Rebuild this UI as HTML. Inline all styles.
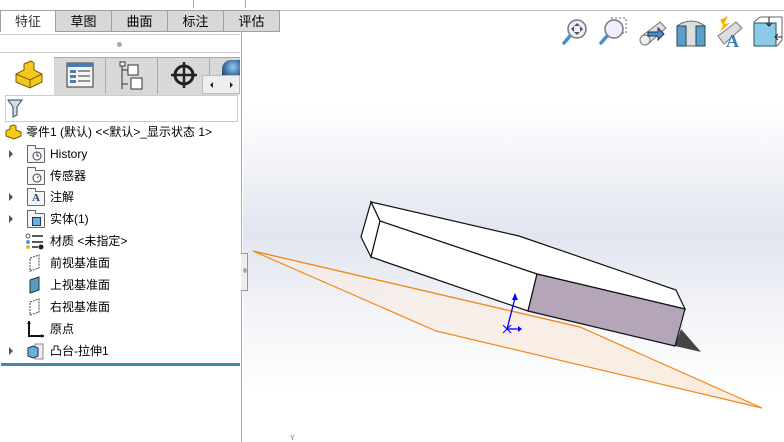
<!DOCTYPE html>
<html><head><meta charset="utf-8"><style>
body{margin:0;width:784px;height:442px;overflow:hidden;background:#fff;font-family:"Liberation Sans","Noto Sans CJK SC",sans-serif;position:relative}
.abs{position:absolute}
.tab{position:absolute;top:10px;height:22px;border:1px solid #a0a0a0;background:#d8d8d8;font-size:13px;line-height:21px;text-align:center;box-sizing:border-box}
.row{position:absolute;left:0;height:20px;font-size:12px;line-height:20px;color:#000;white-space:nowrap}
.tri{position:absolute;left:9px;top:6px;width:0;height:0;border-left:4px solid #555;border-top:4px solid transparent;border-bottom:4px solid transparent}
.fold{position:absolute;left:27px;top:4px;width:16px;height:13px;border:1px solid #666;background:#f4f4f4;border-radius:1px}
.fold:before{content:"";position:absolute;left:-1px;top:-4px;width:7px;height:3px;border:1px solid #666;border-bottom:none;background:#f4f4f4}
.lbl{position:absolute;left:50px}
</style></head><body>
<!-- viewport -->
<div class="abs" style="left:243px;top:11px;width:541px;height:431px;background:linear-gradient(180deg,#fff 0%,#fff 22%,#e1e5ef 52%,#f3f4f8 70%,#fff 88%)"></div>
<div class="abs" style="left:0;top:0;width:784px;height:10px;border-bottom:1px solid #bbb;background:#fff"></div>
<div class="abs" style="left:245px;top:0;width:1px;height:8px;background:#aaa"></div>
<div class="abs" style="left:193px;top:0;width:1px;height:8px;background:#aaa"></div>
<!-- left panel -->
<div class="abs" style="left:0;top:10px;width:241px;height:432px;background:#fff;border-right:1px solid #aaa"></div>
<div class="tab" style="left:0;width:56px;background:#fff;border-bottom:none;color:#333">特征</div>
<div class="tab" style="left:55px;width:57px">草图</div>
<div class="tab" style="left:111px;width:57px">曲面</div>
<div class="tab" style="left:167px;width:57px">标注</div>
<div class="tab" style="left:223px;width:57px">评估</div>
<div class="abs" style="left:0;top:34px;width:240px;height:1px;background:#ccc"></div>
<div class="abs" style="left:117px;top:42px;width:5px;height:5px;border-radius:50%;background:#aaa"></div>
<div class="abs" style="left:0;top:52px;width:240px;height:1px;background:#ccc"></div>
<!-- icon tabs -->
<div class="abs" style="left:54px;top:57px;width:186px;height:37px;background:#d8d8d8;border-top:1px solid #aaa"></div>
<div class="abs" style="left:105px;top:57px;width:1px;height:37px;background:#aaa"></div>
<div class="abs" style="left:157px;top:57px;width:1px;height:37px;background:#aaa"></div>
<div class="abs" style="left:209px;top:57px;width:1px;height:37px;background:#aaa"></div>
<svg class="abs" style="left:14px;top:60px" width="30" height="30"><path d="M2 14 L10 10 L10 4 L17 1 L20 3 L20 10 L28 14 L28 22 L16 28 L2 22 Z" fill="#f4c81c" stroke="#7a5a00"/><path d="M2 14 L16 20 L28 14 M16 20 L16 28" stroke="#7a5a00" fill="none"/></svg>
<svg class="abs" style="left:66px;top:62px" width="28" height="26"><rect x="1" y="1" width="26" height="24" fill="#f4f4f4" stroke="#333"/><rect x="1" y="1" width="26" height="4" fill="#4a7cb0"/><rect x="4" y="8" width="6" height="3" fill="#4a7cb0"/><rect x="4" y="13" width="6" height="3" fill="#4a7cb0"/><rect x="4" y="18" width="6" height="3" fill="#4a7cb0"/><path d="M12 9h12M12 14h12M12 19h12" stroke="#333"/></svg>
<svg class="abs" style="left:119px;top:61px" width="26" height="30"><path d="M3 2v26M3 9h6M3 23h6" stroke="#333" fill="none"/><rect x="9" y="4" width="10" height="10" fill="#fff" stroke="#333"/><rect x="12" y="17" width="11" height="11" fill="#fff" stroke="#333"/><rect x="1" y="1" width="5" height="4" fill="#fff" stroke="#333"/></svg>
<svg class="abs" style="left:170px;top:61px" width="28" height="28"><circle cx="14" cy="14" r="9" fill="none" stroke="#222" stroke-width="3"/><path d="M14 1v26M1 14h26" stroke="#222" stroke-width="2.5"/></svg>
<div class="abs" style="left:222px;top:60px;width:18px;height:18px;border-radius:50% 0 0 0;background:radial-gradient(circle at 60% 40%,#8cf,#124)"></div>
<div class="abs" style="left:202px;top:75px;width:38px;height:19px;background:#eee;border:1px solid #bbb;box-sizing:border-box"></div>
<div class="abs" style="left:210px;top:82px;border-right:3px solid #222;border-top:3px solid transparent;border-bottom:3px solid transparent"></div>
<div class="abs" style="left:230px;top:82px;border-left:3px solid #222;border-top:3px solid transparent;border-bottom:3px solid transparent"></div>
<!-- filter -->
<div class="abs" style="left:5px;top:95px;width:231px;height:25px;border:1px solid #ccc;background:#fff"></div>
<svg class="abs" style="left:7px;top:98px" width="18" height="20"><path d="M1 2h14l-5 7v8l-4 2v-10z" fill="#cde" stroke="#345"/></svg>
<!-- tree -->
<div class="row" style="top:122px;left:0"><svg class="abs" style="left:5px;top:2px" width="18" height="16"><path d="M1 7L5 5V2L9 1L11 2V6L16 8V12L9 15L1 12Z" fill="#f4c81c" stroke="#7a5a00"/></svg><span class="abs" style="left:26px">零件1 (默认) &lt;&lt;默认&gt;_显示状态 1&gt;</span></div>
<div class="row" style="top:144px;width:240px"><div class="tri"></div><div class="fold"><svg class="abs" style="left:3px;top:1px" width="11" height="11"><circle cx="6" cy="6" r="4" fill="#fff" stroke="#345"/><path d="M6 3v3h2" stroke="#345" fill="none"/></svg></div><span class="lbl">History</span></div>
<div class="row" style="top:166px;width:240px"><div class="fold"><svg class="abs" style="left:3px;top:1px" width="11" height="11"><circle cx="6" cy="6" r="4" fill="#fff" stroke="#345"/><path d="M6 6l2-2" stroke="#c33"/></svg></div><span class="lbl">传感器</span></div>
<div class="row" style="top:187px;width:240px"><div class="tri"></div><div class="fold" style="font:bold 11px 'Liberation Serif';color:#246;text-align:center;line-height:13px">A</div><span class="lbl">注解</span></div>
<div class="row" style="top:209px;width:240px"><div class="tri"></div><div class="fold"><div class="abs" style="left:4px;top:3px;width:7px;height:7px;background:#6ab0d8;border:1px solid #235"></div></div><span class="lbl">实体(1)</span></div>
<div class="row" style="top:231px;width:240px"><svg class="abs" style="left:25px;top:2px" width="20" height="17"><circle cx="3" cy="3" r="2" fill="none" stroke="#555"/><circle cx="3" cy="9" r="2" fill="#59c"/><circle cx="3" cy="14" r="2" fill="#eb0"/><path d="M7 3h11M7 9h11M7 14h6" stroke="#222" stroke-width="1.5"/><circle cx="16" cy="14" r="2.5" fill="#222"/></svg><span class="lbl">材质 &lt;未指定&gt;</span></div>
<div class="row" style="top:253px;width:240px"><svg class="abs" style="left:28px;top:1px" width="14" height="18"><path d="M2 4L11 1V14L2 17Z" fill="none" stroke="#444" stroke-dasharray="2 1"/></svg><span class="lbl">前视基准面</span></div>
<div class="row" style="top:275px;width:240px"><svg class="abs" style="left:28px;top:1px" width="14" height="18"><path d="M2 4L11 1V14L2 17Z" fill="#5a9bc4" stroke="#234"/></svg><span class="lbl">上视基准面</span></div>
<div class="row" style="top:297px;width:240px"><svg class="abs" style="left:28px;top:1px" width="14" height="18"><path d="M2 4L11 1V14L2 17Z" fill="none" stroke="#444" stroke-dasharray="2 1"/></svg><span class="lbl">右视基准面</span></div>
<div class="row" style="top:319px;width:240px"><svg class="abs" style="left:26px;top:1px" width="20" height="19"><path d="M3 1V16H18" stroke="#111" stroke-width="2" fill="none"/><path d="M1 4L3 1L5 4M15 14L18 16L15 18" fill="#111"/></svg><span class="lbl">原点</span></div>
<div class="row" style="top:341px;width:240px"><div class="tri"></div><svg class="abs" style="left:26px;top:2px" width="20" height="17"><rect x="9" y="1" width="8" height="15" fill="#eee" stroke="#888"/><path d="M2 5L7 3L12 5V13L7 15L2 13Z" fill="#6ab0d8" stroke="#235"/></svg><span class="lbl">凸台-拉伸1</span></div>
<div class="abs" style="left:1px;top:363px;width:239px;height:3px;background:#3d86b8"></div>
<!-- splitter -->
<div class="abs" style="left:241px;top:253px;width:6px;height:36px;background:#eee;border:1px solid #999;border-left:none"></div>
<div class="abs" style="left:243px;top:268px;width:4px;height:5px;border-radius:50%;background:#aaa"></div>
<svg class="abs" style="left:0;top:0" width="784" height="442">
<defs><linearGradient id="pl" x1="0" y1="0" x2="1" y2="0"><stop offset="0" stop-color="#f6eee8" stop-opacity=".6"/><stop offset="1" stop-color="#fbe9da" stop-opacity=".9"/></linearGradient></defs>
<polygon points="253,251 580,327 762,408 436,331" fill="url(#pl)" stroke="#f08a1c" stroke-width="1.2"/>
<polygon points="681,329 701,352 675,346" fill="#444"/>
<polygon points="371,202 519,236 676,290 685,309 537,274 380,221" fill="#fff" stroke="#111" stroke-width="1.2"/>
<polygon points="371,202 380,221 371,257 361,237" fill="#fff" stroke="#111" stroke-width="1.2"/>
<polygon points="380,221 537,274 528,311 371,257" fill="#fff" stroke="#111" stroke-width="1.2"/>
<polygon points="537,274 685,309 675,346 528,311" fill="#b4a6b8" stroke="#111" stroke-width="1.2"/>
<line x1="253" y1="251" x2="580" y2="327" stroke="#f08a1c" stroke-width="1.2"/>
<path d="M507 329L515 298" stroke="#00f" stroke-width="1.3"/><path d="M512 300L515 293L518 300Z" fill="#00f"/>
<path d="M507 329H520" stroke="#00f" stroke-width="1.3"/><path d="M518 326L522 329L518 332Z" fill="#00f"/>
<path d="M503 325l8 8M511 325l-8 8" stroke="#00f"/>
<text x="290" y="440" font-size="7" fill="#2a2" font-family="Liberation Sans">Y</text>
</svg>
<!-- toolbar icons -->
<svg class="abs" style="left:562px;top:16px" width="222" height="34">
<g><circle cx="15" cy="13" r="9" fill="#eef" stroke="#777" stroke-width="1.5"/><path d="M8 20L2 27" stroke="#4a8fc8" stroke-width="3.5" stroke-linecap="round"/><path d="M15 7l3 3h-6zM15 19l3-3h-6zM9 13l3-3v6zM21 13l-3-3v6z" fill="#555"/></g>
<g transform="translate(37,0)"><rect x="12" y="2" width="15" height="15" fill="none" stroke="#666" stroke-dasharray="2 2"/><circle cx="15" cy="13" r="9" fill="#eef" stroke="#777" stroke-width="1.5"/><path d="M8 20L2 27" stroke="#4a8fc8" stroke-width="3.5" stroke-linecap="round"/></g>
<g transform="translate(74,0)"><path d="M6 20L24 6L30 12L12 28Z" fill="#ddd" stroke="#777"/><ellipse cx="9" cy="24" rx="5" ry="5" fill="#eee" stroke="#777"/><path d="M14 22h10v-4l6 6-6 6v-4H14z" fill="#4a8fc8" stroke="#235" transform="translate(-2,-6)"/></g>
<g transform="translate(112,0)"><path d="M3 10Q17 0 31 10V30H3Z" fill="#ddd" stroke="#666"/><rect x="3" y="10" width="9" height="20" fill="#5aa0c8" stroke="#245"/><rect x="22" y="10" width="9" height="20" fill="#5aa0c8" stroke="#245"/></g>
<g transform="translate(150,0)"><path d="M6 20L24 6L30 12L12 28Z" fill="#ddd" stroke="#777"/><path d="M8 4L16 0L12 8L18 7L8 16L11 9Z" fill="#f4b400"/><text x="14" y="31" font-size="18" font-family="Liberation Serif" fill="#3a7bb0" font-weight="bold">A</text></g>
<g transform="translate(188,0)"><path d="M4 6L10 1H32V24L27 30H4Z" fill="#fff" stroke="#666"/><rect x="4" y="7" width="22" height="23" fill="#8ccbe8" stroke="#256"/><path d="M19 1v9M16 7l3 3 3-3M32 21h-6M28 18l-3 3 3 3" stroke="#222" fill="none"/></g>
</svg>
</body></html>
